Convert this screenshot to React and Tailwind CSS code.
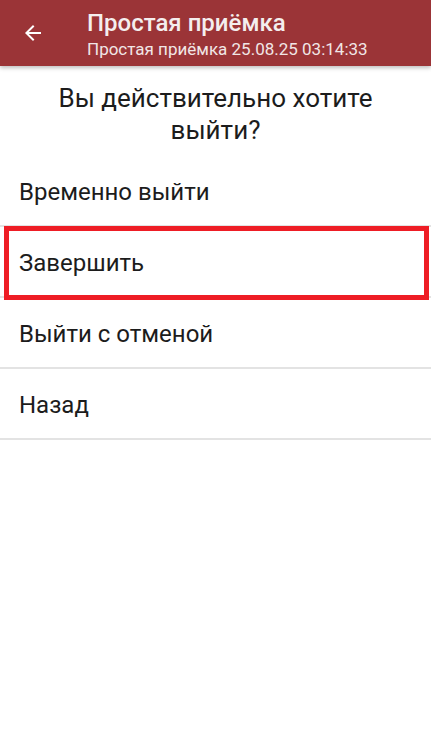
const ACTIONS = [
  { label: 'Временно выйти' },
  { label: 'Завершить', highlighted: true },
  { label: 'Выйти с отменой' },
  { label: 'Назад' },
]

function BackArrow() {
  return (
    <svg width="24" height="24" viewBox="0 0 24 24" fill="none">
      <path
        d="M20 11H7.83l5.59-5.59L12 4l-8 8 8 8 1.41-1.41L7.83 13H20v-2z"
        fill="#ffffff"
      />
    </svg>
  )
}

export default function App() {
  return (
    <div
      className="w-[431px] h-[739px] bg-white overflow-hidden text-[#1c1c1c]"
      style={{ fontFamily: 'Roboto, "Noto Sans", sans-serif' }}
    >
      {/* Toolbar */}
      <div className="relative z-10 h-[66px] bg-[#9b3437] flex items-center shadow-[0_2px_4px_rgba(0,0,0,0.25)]">
        <div className="w-[66px] flex justify-center pr-[1px]">
          <BackArrow />
        </div>
        <div className="flex flex-col pl-[21px] pt-[2px]">
          <span className="text-[24px] leading-[28px] font-medium text-[#f4eeee]">Простая приёмка</span>
          <span className="text-[17px] leading-[20px] text-[#f1e6e6] mt-[2px]">
            Простая приёмка 25.08.25 03:14:33
          </span>
        </div>
      </div>

      {/* Question */}
      <div className="pt-[16px] pb-[10px] px-4 text-center text-[26px] leading-[32px]">
        Вы действительно хотите
        <br />
        выйти?
      </div>

      {/* Actions */}
      <div className="flex flex-col">
        {ACTIONS.map((a) => (
          <div key={a.label} className="relative">
            <div className="h-[71px] flex items-center px-[19px] pt-[3px] text-[24px] border-b-2 border-[#e3e3e3]">
              {a.label}
            </div>
            {a.highlighted && (
              <div className="absolute left-[4px] right-[2px] -top-[1px] h-[74px] border-[5px] border-[#ee1d25]" />
            )}
          </div>
        ))}
      </div>
    </div>
  )
}
